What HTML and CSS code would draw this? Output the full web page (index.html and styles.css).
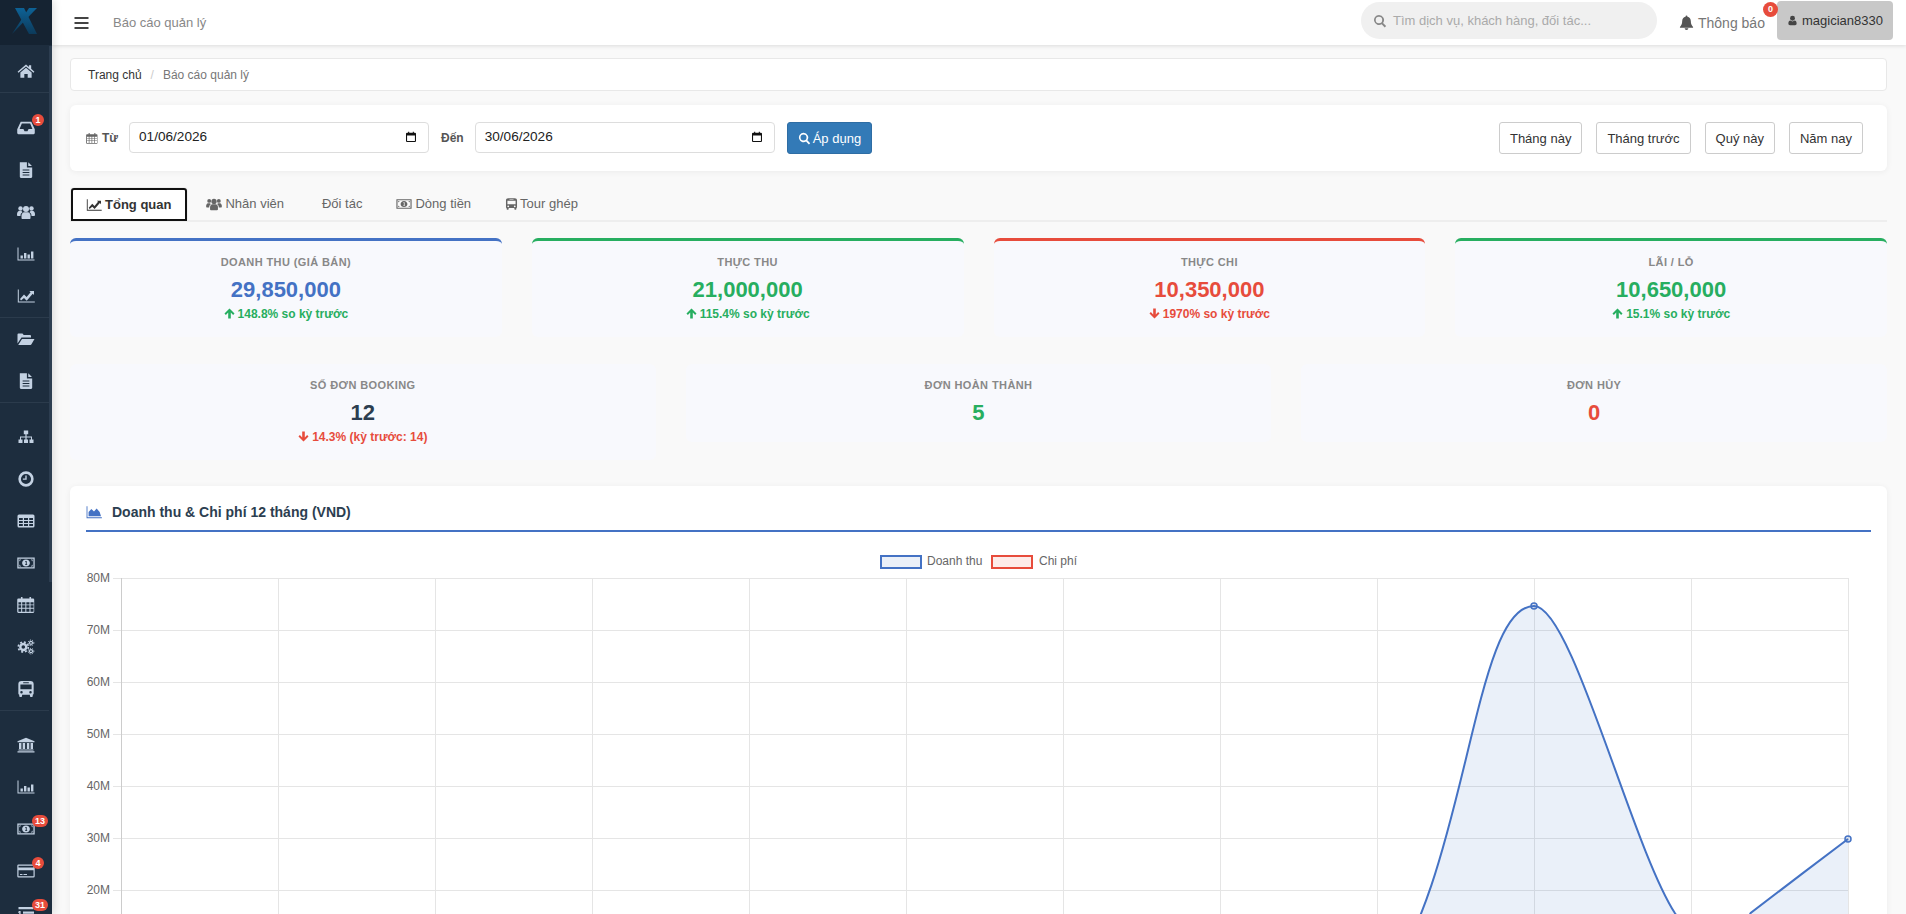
FILE: index.html
```html
<!DOCTYPE html>
<html lang="vi">
<head>
    <meta charset="UTF-8">
    <meta name="viewport" content="width=device-width, initial-scale=1.0">
    <title>Báo cáo quản lý</title>
    <link rel="stylesheet" href="styles.css">
</head>
<body>
    <!-- icon sprite -->
    <svg class="sprite" xmlns="http://www.w3.org/2000/svg">
        <symbol id="i-home" viewBox="0 0 16 16"><path d="M8 2.2l2.6 2.2V2.8h2v3.300l2.900 2.500-.8 1L8 4 1.300 9.600l-.8-1z"/><path d="M3 9.300L8 5.100l5 4.200V14H9.500v-3.300h-3V14H3z"/></symbol>
        <symbol id="i-inbox" viewBox="0 0 16 16"><path fill-rule="evenodd" d="M3.300 2.500h9.400L15.800 9v3.500a1 1 0 0 1-1 1H1.200a1 1 0 0 1-1-1V9zM4.300 4l-2 4.800h3.400l1 2h2.600l1-2h3.400L11.700 4z"/></symbol>
        <symbol id="i-file" viewBox="0 0 16 16"><path fill-rule="evenodd" d="M2.500 1h6.300v4.700h4.700V14a1 1 0 0 1-1 1H3.500a1 1 0 0 1-1-1zM5 7.500v1h6v-1zM5 9.700v1h6v-1zM5 11.900v1h6v-1z"/><path d="M10 1.200l3.300 3.300H10z"/></symbol>
        <symbol id="i-users" viewBox="0 0 18 16"><circle cx="9" cy="5" r="3"/><circle cx="3.500" cy="4.500" r="2.200"/><circle cx="14.500" cy="4.500" r="2.200"/><path d="M4.500 14v-2.500C4.500 9.500 6 8.200 7 8.200h4c1 0 2.500 1.300 2.500 3.300V14c0 .6-.5 1-1 1h-7c-.5 0-1-.4-1-1z"/><path d="M0 10.500C0 8.500 1 7 2 7h2.500c.4.800.8 1.100 1 1.300C4 9 3.500 10.500 3.500 12H1c-.6 0-1-.5-1-1.500zM18 10.500C18 8.500 17 7 16 7h-2.500c-.4.800-.8 1.100-1 1.300 1.500.7 2 2.200 2 3.700H17c.6 0 1-.5 1-1.500z"/></symbol>
        <symbol id="i-bars-chart" viewBox="0 0 18 16"><path d="M.5 1.500h1v12h16v1H.5z"/><path d="M3.500 9.500h2.400v3H3.500zM7 7h2.400v5.500H7zM10.500 8.500h2.400v4h-2.400zM14 5.500h2.400v7H14z"/></symbol>
        <symbol id="i-line" viewBox="0 0 18 16"><path d="M.8 1.500h1v12h16v1H.8z"/><path d="M3 11l4-4.500 2.600 2.500 4-4.800-1.300-1.200H17v4l-1.300-1.300-6 7-2.700-2.600L4 12.500z"/></symbol>
        <symbol id="i-folder" viewBox="0 0 18 16"><path d="M.5 12.500V3.500a1 1 0 0 1 1-1h4l1.200 1.500h6.300a1 1 0 0 1 1 1v1.500H4.500z"/><path d="M5 8h12.500l-3.200 5.500a1 1 0 0 1-.8.500H1.200z"/></symbol>
        <symbol id="i-sitemap" viewBox="0 0 18 16"><path d="M6.800 1.500h4.400v3.800H9.600v2.200h5.400v3h1.500V14h-4v-3.500H14V8.500H9.600v2h1.400V14H7v-3.500h1.400v-2H4v2h1.500V14h-4v-3.500H3v-3h5.400V5.300H6.800z"/></symbol>
        <symbol id="i-clock" viewBox="0 0 16 16"><path fill-rule="evenodd" d="M8 1.200a6.800 6.800 0 1 1 0 13.600A6.800 6.800 0 0 1 8 1.200zm0 2.300a4.500 4.500 0 1 0 0 9 4.500 4.500 0 0 0 0-9z"/><path d="M7.400 4.800h1.200v3.900H5.200V7.500h2.200z"/></symbol>
        <symbol id="i-table" viewBox="0 0 18 16"><path fill-rule="evenodd" d="M2 1.500h14a1.500 1.500 0 0 1 1.500 1.500v10a1.500 1.500 0 0 1-1.500 1.500H2A1.500 1.500 0 0 1 .5 13V3A1.500 1.500 0 0 1 2 1.500zM2 5v2h3.800V5zm5 0v2h4V5zm5.200 0v2H16V5zM2 8v2h3.800V8zm5 0v2h4V8zm5.200 0v2H16V8zM2 11v2h3.800v-2zm5 0v2h4v-2zm5.200 0v2H16v-2z"/></symbol>
        <symbol id="i-money" viewBox="0 0 18 16"><path fill-rule="evenodd" d="M.3 2.500h17.400v11H.3zM1.600 3.800v8.400h14.800V3.800z"/><path d="M2.400 4.600h1.800L2.400 6.400zM15.600 4.600h-1.800l1.800 1.800zM2.400 11.400h1.800L2.400 9.600zM15.600 11.400h-1.800l1.800-1.800z"/><path fill-rule="evenodd" d="M9 4.500c2.300 0 3.900 1.600 3.900 3.500S11.300 11.500 9 11.500 5.100 9.900 5.100 8 6.700 4.500 9 4.500zM8.300 6v.9h.5V9.300h-.7v.8h2.100v-.8h-.5V6z"/></symbol>
        <symbol id="i-calendar" viewBox="0 0 16 16"><path fill-rule="evenodd" d="M3.500.8h1.400v1.500h6.200V.8h1.400v1.500h1.800a1 1 0 0 1 1 1V14a1 1 0 0 1-1 1H1.200a1 1 0 0 1-1-1V3.300a1 1 0 0 1 1-1h2.300zM1.300 5.500v2h2.400v-2zm3.300 0v2h2.800v-2zm3.700 0v2h2.800v-2zm3.700 0v2h2.700v-2zM1.300 8.300v2.200h2.400V8.300zm3.300 0v2.200h2.800V8.300zm3.700 0v2.200h2.800V8.300zm3.700 0v2.200h2.700V8.300zM1.300 11.300V14h2.400v-2.700zm3.300 0V14h2.800v-2.700zm3.700 0V14h2.800v-2.700zm3.700 0V14h2.700v-2.700z"/></symbol>
        <symbol id="i-cogs" viewBox="0 0 18 16"><g fill="none" stroke="currentColor"><circle cx="6.300" cy="8" r="3" stroke-width="2.400"/><circle cx="6.300" cy="8" r="5" stroke-width="1.600" stroke-dasharray="2 1.930"/><circle cx="14" cy="3.800" r="1.500" stroke-width="1.200"/><circle cx="14" cy="3.800" r="2.800" stroke-width="1" stroke-dasharray="1.200 1.130"/><circle cx="14" cy="12.200" r="1.500" stroke-width="1.200"/><circle cx="14" cy="12.200" r="2.800" stroke-width="1" stroke-dasharray="1.200 1.130"/></g></symbol>
        <symbol id="i-bus" viewBox="0 0 16 16"><path fill-rule="evenodd" d="M4 .8h8c1.800 0 2.800 1 2.800 2.700V12a1 1 0 0 1-.8 1v1.300a.8.800 0 0 1-.8.800h-.9a.8.800 0 0 1-.8-.8V13H4.500v1.300a.8.800 0 0 1-.8.800h-.9a.8.800 0 0 1-.8-.8V13a1 1 0 0 1-.8-1V3.500C1.200 1.800 2.200.8 4 .8zM3 4v4.200h10V4zM4 9.800a1.100 1.100 0 1 0 0 2.200 1.100 1.100 0 0 0 0-2.200zm8 0a1.100 1.100 0 1 0 0 2.200 1.100 1.100 0 0 0 0-2.200zM5.500 2v.9h5V2z"/></symbol>
        <symbol id="i-bank" viewBox="0 0 18 16"><path d="M9 .8l8.500 3.400v1H.5v-1zM2 6h2.400v6H2zM5.700 6h2.400v6H5.700zM9.900 6h2.400v6H9.900zM13.600 6H16v6h-2.400zM1.500 12.600h15v1h-15zM.5 14.200h17v1.300H.5z"/></symbol>
        <symbol id="i-card" viewBox="0 0 18 16"><path fill-rule="evenodd" d="M1.500 1.500h15a1.200 1.200 0 0 1 1.200 1.200v10.600a1.200 1.200 0 0 1-1.200 1.200h-15a1.200 1.200 0 0 1-1.200-1.200V2.700a1.200 1.200 0 0 1 1.200-1.200zm0 1.200v1.800h15V2.700zm0 4.500v6.100h15V7.200zM3 11h2.500v.9H3zm3.500 0h3.500v.9H6.500z"/></symbol>
        <symbol id="i-list" viewBox="0 0 18 16"><path d="M1.500 2h15v2.200h-15zM6 6.500h11v2.200H6zM6 11h11v2.200H6zM2 6h1.600v4.500h1.200v1H1v-1h1.200V7.500L1.200 8V7z"/></symbol>
        <symbol id="i-search" viewBox="0 0 16 16"><path fill-rule="evenodd" d="M6.800 1a5.800 5.800 0 0 1 4.700 9.200l3.500 3.500-1.600 1.600-3.500-3.500A5.800 5.800 0 1 1 6.800 1zm0 2.100a3.700 3.700 0 1 0 0 7.400 3.700 3.700 0 0 0 0-7.400z"/></symbol>
        <symbol id="i-bell" viewBox="0 0 16 16"><path d="M8 .5a1 1 0 0 1 1 1v.4c2.300.5 3.600 2.300 3.600 4.600 0 3.500 1 4.700 2.400 6.200v.8H1v-.8c1.400-1.500 2.400-2.700 2.400-6.200C3.400 4.200 4.700 2.400 7 1.900v-.4a1 1 0 0 1 1-1zM6 14.200h4a2 1.700 0 0 1-4 0z"/></symbol>
        <symbol id="i-user" viewBox="0 0 16 16"><circle cx="8" cy="4.800" r="3.600"/><path d="M2 12.500c0-2.700 1.200-4.200 2.900-4.400C5.800 8.900 6.800 9.300 8 9.300s2.200-.4 3.100-1.200c1.700.2 2.900 1.700 2.900 4.400 0 1.500-1 2.500-2.300 2.500H4.300C3 15 2 14 2 12.500z"/></symbol>
        <symbol id="i-menu" viewBox="0 0 14 12"><path d="M0 0h14v2H0zM0 5h14v2H0zM0 10h14v2H0z"/></symbol>
        <symbol id="i-area" viewBox="0 0 18 16"><path d="M.5 1.500h1v12.500h16.500v1H.5z"/><path d="M2.800 12.800V8L6 4.500 9 7.500l3-3.500 3.500 4 1.500 4.800z"/></symbol>
        <symbol id="i-up" viewBox="0 0 16 16"><path d="M8 .8l7.300 7.300-2 2-3.400-3.400v8.500H6.100V6.700L2.700 10.100l-2-2z"/></symbol>
        <symbol id="i-down" viewBox="0 0 16 16"><path d="M8 15.200L.7 7.900l2-2 3.400 3.400V.8h3.800v8.500l3.400-3.400 2 2z"/></symbol>
        <symbol id="i-date" viewBox="0 0 14 16"><path fill-rule="evenodd" d="M3 .5h1.500V2h5V.5H11V2h1.500A1.500 1.500 0 0 1 14 3.500v10a1.500 1.500 0 0 1-1.500 1.500h-11A1.500 1.500 0 0 1 0 13.500v-10A1.500 1.500 0 0 1 1.500 2H3zM1.500 6v7.500h11V6z"/></symbol>
    </svg>

    <aside class="sidebar">
        <div class="logo">
            <svg width="26" height="27" viewBox="0 0 26 27">
                <defs>
                    <linearGradient id="logoFade" x1="0" y1="0" x2="0" y2="1">
                        <stop offset="0" stop-color="#0d6296"/>
                        <stop offset="1" stop-color="#0c3a5a"/>
                    </linearGradient>
                </defs>
                <path d="M3 0h9l13 26h-8z" fill="url(#logoFade)"/>
                <path d="M17 0h8L0 26z" fill="url(#logoFade)"/>
            </svg>
        </div>
        <div class="rail"></div>
        <nav class="nav">
            <div class="nav-group">
                <a class="nav-item"><svg class="nav-icon"><use href="#i-home"/></svg></a>
            </div>
            <div class="nav-group spaced first">
                <a class="nav-item"><svg class="nav-icon"><use href="#i-inbox"/></svg><span class="nav-badge">1</span></a>
                <a class="nav-item"><svg class="nav-icon"><use href="#i-file"/></svg></a>
                <a class="nav-item"><svg class="nav-icon"><use href="#i-users"/></svg></a>
                <a class="nav-item"><svg class="nav-icon"><use href="#i-bars-chart"/></svg></a>
                <a class="nav-item"><svg class="nav-icon"><use href="#i-line"/></svg></a>
            </div>
            <div class="nav-group">
                <a class="nav-item"><svg class="nav-icon"><use href="#i-folder"/></svg></a>
                <a class="nav-item"><svg class="nav-icon"><use href="#i-file"/></svg></a>
            </div>
            <div class="nav-group spaced">
                <a class="nav-item"><svg class="nav-icon"><use href="#i-sitemap"/></svg></a>
                <a class="nav-item"><svg class="nav-icon"><use href="#i-clock"/></svg></a>
                <a class="nav-item"><svg class="nav-icon"><use href="#i-table"/></svg></a>
                <a class="nav-item"><svg class="nav-icon"><use href="#i-money"/></svg></a>
                <a class="nav-item"><svg class="nav-icon"><use href="#i-calendar"/></svg></a>
                <a class="nav-item"><svg class="nav-icon"><use href="#i-cogs"/></svg></a>
                <a class="nav-item"><svg class="nav-icon"><use href="#i-bus"/></svg></a>
            </div>
            <div class="nav-group spaced last">
                <a class="nav-item"><svg class="nav-icon"><use href="#i-bank"/></svg></a>
                <a class="nav-item"><svg class="nav-icon"><use href="#i-bars-chart"/></svg></a>
                <a class="nav-item"><svg class="nav-icon"><use href="#i-money"/></svg><span class="nav-badge wide">13</span></a>
                <a class="nav-item"><svg class="nav-icon"><use href="#i-card"/></svg><span class="nav-badge">4</span></a>
                <a class="nav-item"><svg class="nav-icon"><use href="#i-list"/></svg><span class="nav-badge wide">31</span></a>
            </div>
        </nav>
    </aside>

    <div class="main">
        <header class="topbar">
            <svg class="menu-btn"><use href="#i-menu"/></svg>
            <span class="page-title">Báo cáo quản lý</span>
            <div class="search">
                <svg class="search-icon"><use href="#i-search"/></svg>
                <span>Tìm dịch vụ, khách hàng, đối tác...</span>
            </div>
            <div class="notify">
                <svg class="bell"><use href="#i-bell"/></svg>
                <span>Thông báo</span>
                <span class="notify-badge">0</span>
            </div>
            <div class="user-btn">
                <svg class="user-icon"><use href="#i-user"/></svg>
                <span>magician8330</span>
            </div>
        </header>

        <div class="content">
            <div class="breadcrumb">
                <span class="crumb">Trang chủ</span>
                <span class="crumb-sep">/</span>
                <span class="crumb-current">Báo cáo quản lý</span>
            </div>

            <div class="filter-card">
                <label class="filter-label"><svg class="filter-cal"><use href="#i-calendar"/></svg>Từ</label>
                <div class="date-box"><span>01/06/2026</span><svg class="date-icon"><use href="#i-date"/></svg></div>
                <label class="filter-label">Đến</label>
                <div class="date-box"><span>30/06/2026</span><svg class="date-icon"><use href="#i-date"/></svg></div>
                <button class="btn-apply"><svg class="apply-icon"><use href="#i-search"/></svg>Áp dụng</button>
                <div class="quick-ranges">
                    <button class="btn-range">Tháng này</button>
                    <button class="btn-range">Tháng trước</button>
                    <button class="btn-range">Quý này</button>
                    <button class="btn-range">Năm nay</button>
                </div>
            </div>

            <div class="tabs">
                <a class="tab active"><svg class="tab-icon"><use href="#i-line"/></svg>Tổng quan</a>
                <a class="tab"><svg class="tab-icon"><use href="#i-users"/></svg>Nhân viên</a>
                <a class="tab plain">Đối tác</a>
                <a class="tab"><svg class="tab-icon"><use href="#i-money"/></svg>Dòng tiền</a>
                <a class="tab"><svg class="tab-icon narrow"><use href="#i-bus"/></svg>Tour ghép</a>
            </div>

            <div class="kpi-row four">
                <div class="kpi top-blue">
                    <div class="kpi-label">Doanh thu (giá bán)</div>
                    <div class="kpi-value blue">29,850,000</div>
                    <div class="kpi-sub green"><svg class="arrow"><use href="#i-up"/></svg>148.8% so kỳ trước</div>
                </div>
                <div class="kpi top-green">
                    <div class="kpi-label">Thực thu</div>
                    <div class="kpi-value green">21,000,000</div>
                    <div class="kpi-sub green"><svg class="arrow"><use href="#i-up"/></svg>115.4% so kỳ trước</div>
                </div>
                <div class="kpi top-red">
                    <div class="kpi-label">Thực chi</div>
                    <div class="kpi-value red">10,350,000</div>
                    <div class="kpi-sub red"><svg class="arrow"><use href="#i-down"/></svg>1970% so kỳ trước</div>
                </div>
                <div class="kpi top-green">
                    <div class="kpi-label">Lãi / Lỗ</div>
                    <div class="kpi-value green">10,650,000</div>
                    <div class="kpi-sub green"><svg class="arrow"><use href="#i-up"/></svg>15.1% so kỳ trước</div>
                </div>
            </div>

            <div class="kpi-row three">
                <div class="kpi">
                    <div class="kpi-label">Số đơn booking</div>
                    <div class="kpi-value dark">12</div>
                    <div class="kpi-sub red"><svg class="arrow"><use href="#i-down"/></svg>14.3% (kỳ trước: 14)</div>
                </div>
                <div class="kpi">
                    <div class="kpi-label">Đơn hoàn thành</div>
                    <div class="kpi-value green">5</div>
                </div>
                <div class="kpi">
                    <div class="kpi-label">Đơn hủy</div>
                    <div class="kpi-value red">0</div>
                </div>
            </div>

            <div class="chart-card">
                <div class="chart-head">
                    <svg class="chart-head-icon"><use href="#i-area"/></svg>
                    <span>Doanh thu &amp; Chi phí 12 tháng (VND)</span>
                </div>
                <svg class="chart" viewBox="86 540 1785 460" width="1785" height="460">
                    <g class="legend">
                        <rect x="881" y="556" width="40" height="12" fill="#ebf0f8" stroke="#4472c4" stroke-width="2"/>
                        <text x="927" y="565">Doanh thu</text>
                        <rect x="992" y="556" width="40" height="12" fill="#fdecea" stroke="#e74c3c" stroke-width="2"/>
                        <text x="1039" y="565">Chi phí</text>
                    </g>
                    <path class="grid" d="M113 578.5H1849M113 630.5H1849M113 682.5H1849M113 734.5H1849M113 786.5H1849M113 838.5H1849M113 890.5H1849M113 942.5H1849"/>
                    <path class="grid" d="M278.5 578V1000M435.5 578V1000M592.5 578V1000M749.5 578V1000M906.5 578V1000M1063.5 578V1000M1220.5 578V1000M1377.5 578V1000M1534.5 578V1000M1691.5 578V1000M1848.5 578V1000"/>
                    <path class="axis" d="M121.5 578V1000"/>
                    <g class="y-labels">
                        <text x="110" y="582">80M</text>
                        <text x="110" y="634">70M</text>
                        <text x="110" y="686">60M</text>
                        <text x="110" y="738">50M</text>
                        <text x="110" y="790">40M</text>
                        <text x="110" y="842">30M</text>
                        <text x="110" y="894">20M</text>
                    </g>
                    <path class="area" d="M1377 994C1468.3 881.1 1471.2 606 1534 606C1572 606 1631 845 1675 913.3L1700 950L1730 950L1750.7 913C1782 889 1816 863 1848 839L1848 994Z"/>
                    <path class="line" d="M1377 994C1468.3 881.1 1471.2 606 1534 606C1572 606 1631 845 1675 913.3L1700 950L1730 950L1750.7 913C1782 889 1816 863 1848 839"/>
                    <circle class="dot" cx="1534" cy="606" r="3"/>
                    <circle class="dot" cx="1848" cy="839" r="3"/>
                </svg>
            </div>
        </div>
    </div>
</body>
</html>
```

FILE: styles.css
```css
* {
    box-sizing: border-box;
}
html, body {
    height: 100%;
}
body {
    margin: 0;
    display: flex;
    overflow: hidden;
    background-color: #f9f9f9;
    font-family: "Liberation Sans", Arial, sans-serif;
    font-size: 12px;
    color: #333;
}
.sprite {
    display: none;
}
svg {
    fill: currentColor;
    flex-shrink: 0;
}

/* sidebar */
.sidebar {
    position: relative;
    flex: 0 0 52px;
    background-color: #1d2d3e;
    box-shadow: 2px 0 8px rgba(0, 0, 0, 0.12);
    z-index: 2;
}
.logo {
    height: 45px;
    padding: 8px 0 0 12px;
    background-color: #152332;
}
.rail {
    position: absolute;
    top: 46px;
    right: 0;
    width: 3px;
    height: 536px;
    background-color: #2c3d50;
}
.nav {
    padding-top: 5px;
    margin-right: 3px;
}
.nav-group {
    border-bottom: 1px solid #2b3b4c;
}
.nav-group.spaced {
    padding-top: 13px;
}
.nav-group.spaced.first {
    padding-top: 14px;
}
.nav-group.last {
    border-bottom: none;
}
.nav-item {
    position: relative;
    display: flex;
    align-items: center;
    justify-content: center;
    height: 42px;
    margin-right: -3px;
    color: #c3d1e2;
}
.nav-icon {
    width: 18px;
    height: 18px;
}
.nav-badge {
    position: absolute;
    top: 7px;
    left: 32px;
    min-width: 12px;
    height: 12px;
    padding: 0 2px;
    border-radius: 6px;
    background-color: #e74c3c;
    color: #fff;
    font-size: 9px;
    font-weight: bold;
    line-height: 12px;
    text-align: center;
}
.nav-badge.wide {
    min-width: 16px;
}

/* top bar */
.main {
    flex: 1;
    min-width: 0;
}
.topbar {
    display: flex;
    align-items: center;
    height: 45px;
    padding: 0 13px 0 22px;
    background-color: #fff;
    box-shadow: 0 1px 4px rgba(0, 0, 0, 0.12);
}
.menu-btn {
    width: 15px;
    height: 12px;
    color: #444;
}
.page-title {
    margin-left: 24px;
    font-size: 13px;
    color: #888;
}
.search {
    display: flex;
    align-items: center;
    width: 296px;
    height: 37px;
    margin: -4px 0 0 auto;
    padding-left: 12px;
    border-radius: 19px;
    background-color: #f0f0f0;
    color: #aaa;
    font-size: 13px;
}
.search-icon {
    width: 14px;
    height: 14px;
    margin-right: 6px;
    color: #888;
}
.notify {
    position: relative;
    display: flex;
    align-items: center;
    width: 98px;
    margin-left: 22px;
    color: #777;
    font-size: 14px;
}
.bell {
    width: 15px;
    height: 15px;
    margin-right: 4px;
    color: #555;
}
.notify-badge {
    position: absolute;
    top: -13px;
    left: 84px;
    width: 15px;
    height: 15px;
    border-radius: 8px;
    background-color: #e74c3c;
    color: #fff;
    font-size: 9px;
    font-weight: bold;
    line-height: 15px;
    text-align: center;
}
.user-btn {
    display: flex;
    align-items: center;
    width: 116px;
    height: 39px;
    margin-top: -4px;
    padding-left: 10px;
    border-radius: 4px;
    background-color: #c8c8c8;
    font-size: 13px;
    color: #333;
}
.user-icon {
    width: 11px;
    height: 11px;
    margin-right: 4px;
    color: #444;
}

/* page content */
.content {
    padding: 13px 19px 0 18px;
}
.breadcrumb {
    display: flex;
    align-items: center;
    height: 33px;
    margin-bottom: 14px;
    padding-left: 17px;
    border: 1px solid #e8e8e8;
    border-radius: 4px;
    background-color: #fff;
}
.crumb-sep {
    margin: 0 9px;
    color: #ccc;
}
.crumb-current {
    color: #777;
}
.filter-card {
    display: flex;
    align-items: center;
    height: 66px;
    margin-bottom: 16px;
    padding: 0 24px 0 16px;
    border-radius: 6px;
    background-color: #fff;
    box-shadow: 0 1px 6px rgba(0, 0, 0, 0.06);
}
.filter-label {
    display: flex;
    align-items: center;
    margin-right: 11px;
    font-weight: bold;
    color: #555;
}
.filter-cal {
    width: 12px;
    height: 13px;
    margin-right: 4px;
    color: #666;
}
.date-box {
    display: flex;
    align-items: center;
    justify-content: space-between;
    width: 300px;
    height: 31px;
    margin: 0 12px 2px 0;
    padding: 0 12px 1px 9px;
    border: 1px solid #ddd;
    border-radius: 4px;
    background-color: #fff;
    font-size: 13.6px;
    color: #222;
}
.date-icon {
    width: 10px;
    height: 12px;
    color: #111;
}
.btn-apply {
    display: flex;
    align-items: center;
    height: 32px;
    padding: 0 10px;
    border: 1px solid #2e6da4;
    border-radius: 3px;
    background-color: #337ab7;
    color: #fff;
    font-family: inherit;
    font-size: 13px;
}
.apply-icon {
    width: 13px;
    height: 13px;
    margin-right: 2px;
}
.quick-ranges {
    display: flex;
    gap: 14px;
    margin-left: auto;
}
.btn-range {
    height: 32px;
    padding: 0 10px;
    border: 1px solid #ccc;
    border-radius: 3px;
    background-color: #fff;
    color: #333;
    font-family: inherit;
    font-size: 13px;
}

/* tabs */
.tabs {
    display: flex;
    height: 35px;
    margin-bottom: 16px;
    border-bottom: 2px solid #eee;
}
.tab {
    display: flex;
    align-items: center;
    height: 33px;
    padding: 0 17px;
    color: #666;
    font-size: 13px;
}
.tab.plain {
    padding-left: 21px;
}
.tab.active {
    height: 35px;
    padding: 0 16px 0 15px;
    margin-right: 1px;
    background-color: #fff;
    border: 1px solid #eee;
    border-radius: 4px 4px 0 0;
    color: #333;
    font-size: 13px;
    font-weight: bold;
    outline: 2px solid #111;
    outline-offset: -3px;
}
.tab-icon {
    width: 16px;
    height: 14px;
    margin-right: 3px;
}
.tab-icon.narrow {
    width: 13px;
    margin-right: 2px;
}

/* kpi cards */
.kpi-row {
    display: grid;
    align-items: start;
    gap: 30px;
    margin-bottom: 27px;
}
.kpi-row.four {
    grid-template-columns: repeat(4, 1fr);
}
.kpi-row.three {
    grid-template-columns: repeat(3, 1fr);
    margin-bottom: 26px;
}
.kpi {
    padding: 14px 0 16px;
    border-radius: 6px;
    background-color: #f8f9fd;
    text-align: center;
}
.top-blue,
.top-green,
.top-red {
    border-top: 3px solid;
}
.top-blue {
    border-top-color: #4472c4;
}
.top-green {
    border-top-color: #27ae60;
}
.top-red {
    border-top-color: #e74c3c;
}
.kpi-label {
    font-size: 11px;
    font-weight: bold;
    line-height: 14px;
    letter-spacing: 0.4px;
    text-transform: uppercase;
    color: #888;
}
.kpi-value {
    margin-top: 8px;
    font-size: 22px;
    font-weight: bold;
    line-height: 26px;
}
.kpi-sub {
    margin: 4px 0 -1px;
    font-size: 12px;
    font-weight: bold;
    line-height: 15px;
}
.blue {
    color: #4472c4;
}
.green {
    color: #27ae60;
}
.red {
    color: #e74c3c;
}
.dark {
    color: #2c3e50;
}
.arrow {
    width: 11px;
    height: 11px;
    margin-right: 3px;
    vertical-align: -1px;
}

/* chart */
.chart-card {
    height: 600px;
    padding: 16px;
    border-radius: 6px;
    background-color: #fff;
    box-shadow: 0 1px 6px rgba(0, 0, 0, 0.06);
}
.chart-head {
    display: flex;
    align-items: center;
    height: 30px;
    padding-bottom: 8px;
    border-bottom: 2px solid #4472c4;
    color: #2c3e50;
    font-size: 14px;
    font-weight: bold;
}
.chart-head-icon {
    width: 16px;
    height: 14px;
    margin-right: 10px;
    color: #4472c4;
}
.chart {
    display: block;
    margin-top: 8px;
}
.chart text {
    font-size: 12px;
    fill: #666;
}
.y-labels text {
    text-anchor: end;
}
.grid {
    fill: none;
    stroke: #e5e5e5;
    stroke-width: 1;
}
.axis {
    fill: none;
    stroke: #ccc;
    stroke-width: 1;
}
.area {
    fill: rgba(68, 114, 196, 0.11);
    stroke: none;
}
.line {
    fill: none;
    stroke: #4472c4;
    stroke-width: 2;
}
.dot {
    fill: rgba(68, 114, 196, 0.15);
    stroke: #4472c4;
    stroke-width: 1.5;
}
```
